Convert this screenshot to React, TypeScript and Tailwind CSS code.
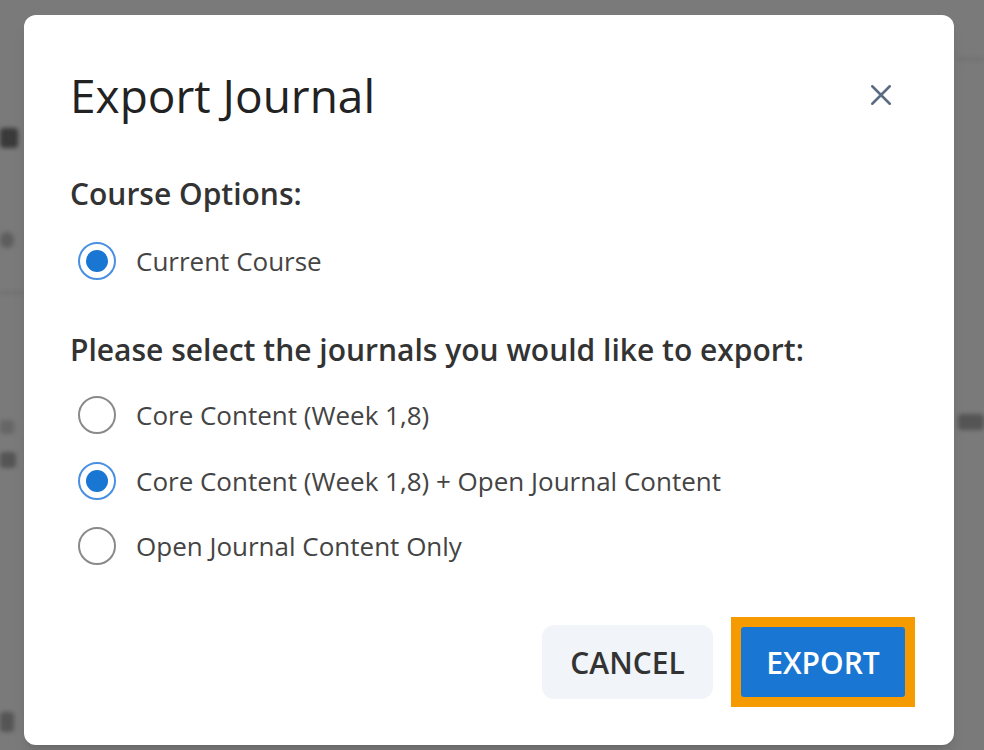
import React, { useState } from 'react'

const font = { fontFamily: '"Open Sans", "Noto Sans", sans-serif' }

function Radio({ checked, label, onSelect }: { checked: boolean; label: string; onSelect: () => void }) {
  return (
    <label className="flex items-center gap-[20px] cursor-pointer" onClick={onSelect}>
      <span
        className={
          checked
            ? 'w-[38px] h-[38px] rounded-full border-2 border-[#4a90e2] flex items-center justify-center'
            : 'w-[38px] h-[38px] rounded-full border-2 border-[#8a8a8a] flex items-center justify-center'
        }
      >
        {checked && <span className="w-[22px] h-[22px] rounded-full bg-[#1976d2]" />}
      </span>
      <span className="text-[26px] leading-[38px] text-[#444444]">{label}</span>
    </label>
  )
}

export default function App() {
  const [course, setCourse] = useState('current')
  const [journal, setJournal] = useState('both')

  return (
    <div className="relative w-[984px] h-[750px] overflow-hidden bg-[#7a7a7a]" style={font}>
      {/* page behind the overlay, only its edges show */}
      <div className="absolute inset-0 blur-[2px]">
        <div className="absolute left-0 top-[128px] w-[18px] h-[20px] bg-[#3a3a3a] rounded-sm" />
        <div className="absolute left-0 top-[232px] w-[14px] h-[16px] bg-[#5e5e5e] rounded-full" />
        <div className="absolute left-0 top-[292px] w-[24px] h-[2px] bg-[#6c6c6c]" />
        <div className="absolute left-0 top-[420px] w-[14px] h-[14px] bg-[#666] rounded-sm" />
        <div className="absolute left-0 top-[452px] w-[16px] h-[16px] bg-[#555] rounded-sm" />
        <div className="absolute left-0 top-[712px] w-[14px] h-[20px] bg-[#555] rounded-sm" />
        <div className="absolute left-[958px] top-[414px] w-[26px] h-[16px] bg-[#555] rounded-sm" />
        <div className="absolute left-[958px] top-[58px] w-[26px] h-[2px] bg-[#6c6c6c]" />
      </div>
      <div className="relative pt-[15px] pl-[24px]">
        <div className="w-[930px] h-[730px] bg-white rounded-[12px] shadow-lg pl-[46px] pr-[56px] pt-[57px] flex flex-col">
          <div className="flex items-center justify-between">
            <h2 className="text-[46px] leading-[46px] text-[#222222]">Export Journal</h2>
            <button className="w-[36px] h-[36px] flex items-center justify-center text-[#5a6b82] -mr-[1px]">
              <svg width="30" height="30" viewBox="0 0 24 24" fill="none" stroke="currentColor" strokeWidth="2" strokeLinecap="round">
                <path d="M5 5 L19 19 M19 5 L5 19" />
              </svg>
            </button>
          </div>

          <h3 className="mt-[58px] text-[30px] leading-[36px] font-semibold text-[#333333]">Course Options:</h3>
          <div className="mt-[30px] pl-[8px] flex flex-col">
            <Radio checked={course === 'current'} label="Current Course" onSelect={() => setCourse('current')} />
          </div>

          <h3 className="mt-[52px] text-[30px] leading-[36px] font-semibold text-[#333333]">
            Please select the journals you would like to export:
          </h3>
          <div className="mt-[28px] pl-[8px] flex flex-col gap-[27.5px]">
            <Radio checked={journal === 'core'} label="Core Content (Week 1,8)" onSelect={() => setJournal('core')} />
            <Radio
              checked={journal === 'both'}
              label="Core Content (Week 1,8) + Open Journal Content"
              onSelect={() => setJournal('both')}
            />
            <Radio checked={journal === 'open'} label="Open Journal Content Only" onSelect={() => setJournal('open')} />
          </div>

          <div className="mt-[52px] flex items-center justify-end gap-[18px] -mr-[17px]">
            <button className="w-[171px] h-[74px] rounded-[12px] bg-[#f1f4f8] text-[30px] font-semibold text-[#333333]">
              CANCEL
            </button>
            <div className="p-[10px] bg-[#f59b00]">
              <button className="w-[164px] h-[70px] rounded-[3px] bg-[#1976d2] text-[30px] font-semibold text-white">
                EXPORT
              </button>
            </div>
          </div>
        </div>
      </div>
    </div>
  )
}
